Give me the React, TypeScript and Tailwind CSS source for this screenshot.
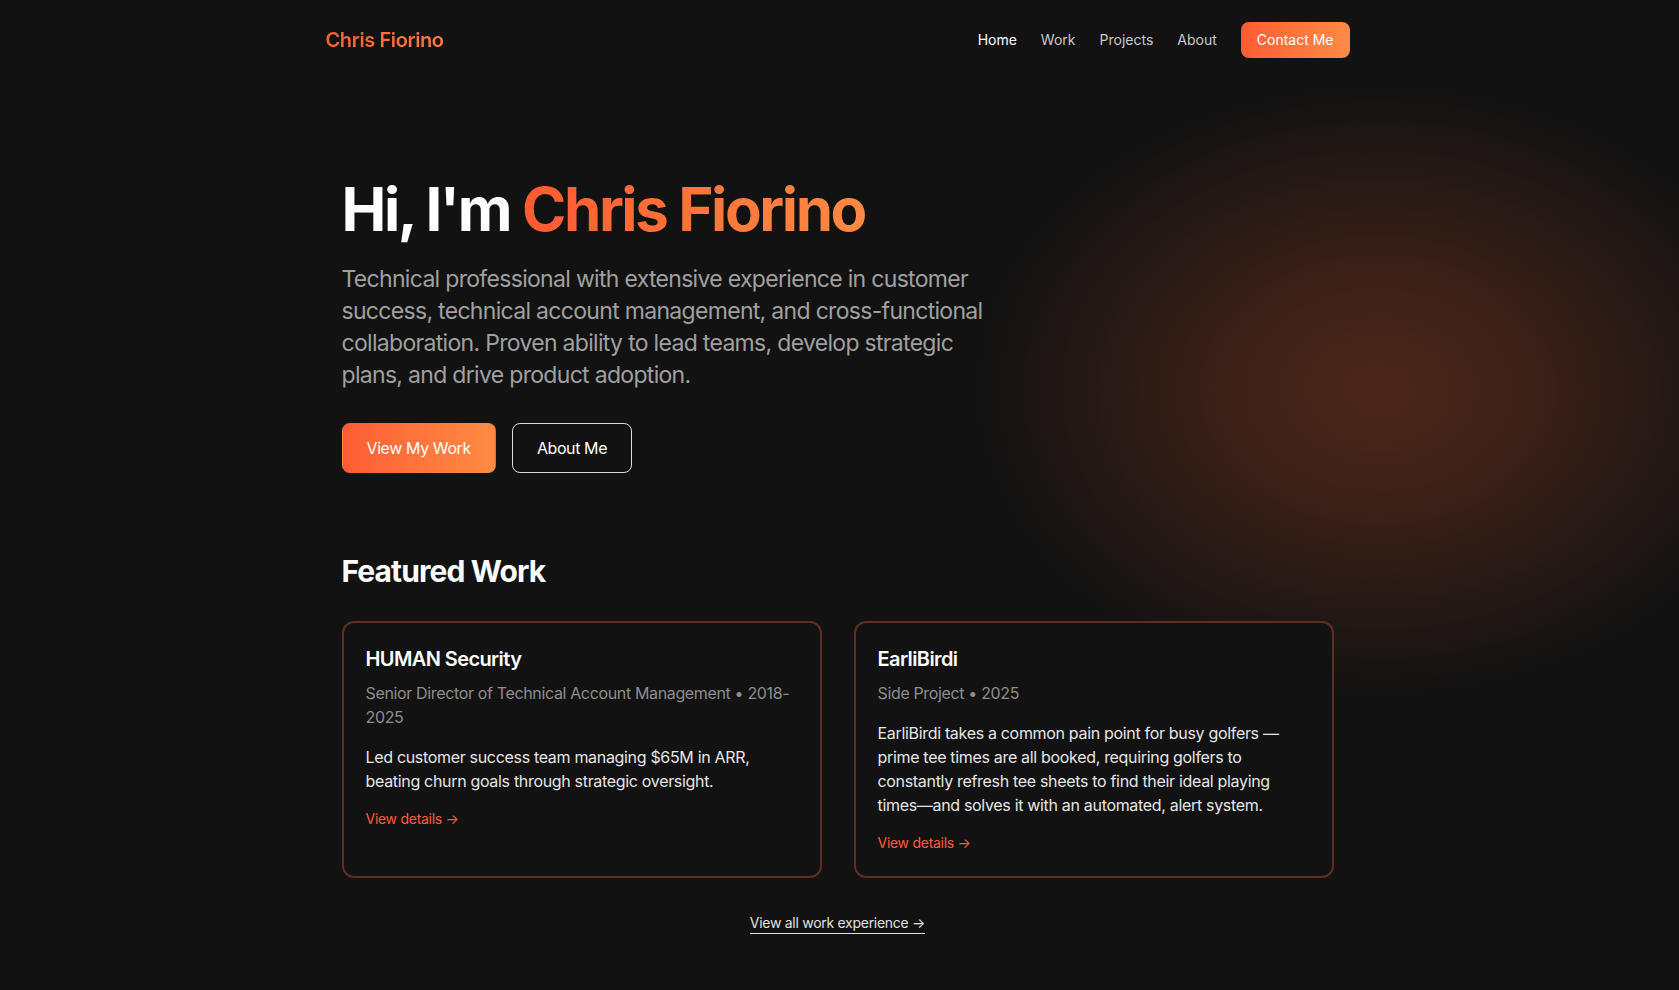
const navLinks = ["Home", "Work", "Projects", "About"];

const featured = [
  {
    title: "HUMAN Security",
    meta: "Senior Director of Technical Account Management • 2018-2025",
    body: "Led customer success team managing $65M in ARR, beating churn goals through strategic oversight.",
  },
  {
    title: "EarliBirdi",
    meta: "Side Project • 2025",
    body: "EarliBirdi takes a common pain point for busy golfers — prime tee times are all booked, requiring golfers to constantly refresh tee sheets to find their ideal playing times—and solves it with an automated, alert system.",
  },
];

function WorkCard({ title, meta, body }: { title: string; meta: string; body: string }) {
  return (
    <div className="rounded-xl border-2 border-[#5e2f20] bg-[#121212] p-[22px]">
      <h3 className="mb-2 text-xl font-semibold tracking-[-0.03em] text-white">{title}</h3>
      <p className="mb-4 text-base tracking-[-0.022em] text-[#8e8e8e]">{meta}</p>
      <p className="text-base tracking-[-0.02em] text-[#e6e6e6]">{body}</p>
      <a href="#" className="mt-4 inline-block text-sm tracking-[-0.02em] text-[#ff5a36]">
        View details →
      </a>
    </div>
  );
}

export default function App() {
  return (
    <div className="relative min-h-screen overflow-hidden bg-[#121212] pr-1 font-[Inter,sans-serif] text-white">
      {/* glow */}
      <div className="pointer-events-none absolute right-[-110px] top-[80px] h-[620px] w-[820px] bg-[radial-gradient(ellipse_closest-side,rgba(255,100,50,0.25)_0%,rgba(255,100,50,0.17)_40%,rgba(255,100,50,0.06)_78%,transparent_100%)]" />

      {/* NAV */}
      <nav className="relative mx-auto flex h-20 max-w-5xl items-center justify-between">
        <a
          href="#"
          className="bg-gradient-to-r from-[#ff5f36] to-[#ff7a3d] bg-clip-text text-xl font-semibold tracking-[-0.02em] text-transparent"
        >
          Chris Fiorino
        </a>
        <div className="flex items-center gap-6">
          {navLinks.map((l, i) => (
            <a key={l} href="#" className={`text-sm ${i === 0 ? "text-white" : "text-[#c9c9c9]"}`}>
              {l}
            </a>
          ))}
          <a
            href="#"
            className="rounded-lg bg-gradient-to-r from-[#ff5c35] to-[#ff8a45] px-4 py-2 text-sm text-white"
          >
            Contact Me
          </a>
        </div>
      </nav>

      {/* HERO */}
      <section className="relative mx-auto max-w-5xl px-4 pb-20 pt-[99px]">
        <h1 className="mb-6 text-6xl font-bold tracking-[-0.04em] text-white">
          Hi, I'm{" "}
          <span className="bg-gradient-to-r from-[#ff5a33] to-[#ff8a42] bg-clip-text text-transparent">
            Chris Fiorino
          </span>
        </h1>
        <p className="max-w-2xl text-[23px] leading-8 tracking-[-0.03em] text-[#a0a0a0]">
          Technical professional with extensive experience in customer success, technical account management, and
          cross-functional collaboration. Proven ability to lead teams, develop strategic plans, and drive product
          adoption.
        </p>
        <div className="mt-8 flex gap-4">
          <a
            href="#"
            className="rounded-lg border border-transparent bg-gradient-to-r from-[#ff5c35] to-[#ff8a42] px-6 py-3 text-base tracking-[-0.025em] text-white"
          >
            View My Work
          </a>
          <a href="#" className="rounded-lg border border-white/85 px-6 py-3 text-base tracking-[-0.025em] text-white">
            About Me
          </a>
        </div>
      </section>

      {/* FEATURED */}
      <section className="relative mx-auto max-w-5xl px-4 pb-14">
        <h2 className="mb-8 text-3xl font-bold tracking-[-0.03em] text-white">Featured Work</h2>
        <div className="grid grid-cols-2 gap-8">
          {featured.map((f) => (
            <WorkCard key={f.title} {...f} />
          ))}
        </div>
        <div className="mt-[35px] flex justify-center">
          <a href="#" className="border-b border-[#e0e0e0] text-sm tracking-[-0.02em] text-[#e0e0e0]">
            View all work experience →
          </a>
        </div>
      </section>
    </div>
  );
}
